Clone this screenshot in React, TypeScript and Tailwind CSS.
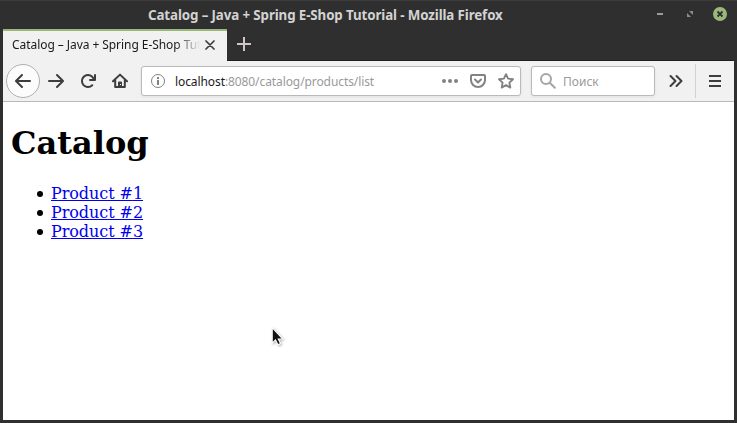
import type { ReactNode } from 'react';

function Icon({ children, className = '' }: { children: ReactNode; className?: string }) {
  return (
    <svg viewBox="0 0 16 16" className={`h-4 w-4 shrink-0 ${className}`} fill="currentColor">
      {children}
    </svg>
  );
}

const ARROW =
  'M15 7H3.414l4.293-4.293a1 1 0 0 0-1.414-1.414l-6 6a1 1 0 0 0 0 1.414l6 6a1 1 0 0 0 1.414-1.414L3.414 9H15a1 1 0 0 0 0-2z';

function TitleBar() {
  return (
    <header className="flex h-[29px] items-center border-t border-[#3c3c3c] pl-[148px] text-[#d3d3d3]">
      <h1 className="w-[360px] whitespace-nowrap text-[13.33px] leading-5 font-bold tracking-[-0.108px]">
        Catalog – Java + Spring E-Shop Tutorial - Mozilla Firefox
      </h1>
      <div className="mb-0.5 ml-auto flex items-center pr-2.5">
        <span className="mr-6 h-0.5 w-1.5 bg-[#9b9b9b]" />
        <svg viewBox="0 0 6 6" className="mr-5 h-1.5 w-1.5" fill="#8c8c8c">
          <path d="M2 0h4v4zM0 2v4h4z" />
        </svg>
        <svg viewBox="0 0 14 14" className="h-3.5 w-3.5">
          <circle cx="7" cy="7" r="7" fill="#9ab87c" />
          <path d="m4.5 4.5 5 5m0-5-5 5" stroke="#2f2f2f" strokeWidth="1.8" />
        </svg>
      </div>
    </header>
  );
}

function TabStrip() {
  return (
    <div className="flex h-8 border-b border-[#1e1e1e] text-[12px]">
      <div className="-mb-px flex w-[224px] items-center border-t-2 border-[#9ab87c] bg-[#f1f1f1] pl-[9px] text-[#18191a]">
        <span className="mb-0.5 w-[188px] overflow-hidden whitespace-nowrap tracking-[-0.06px] [mask-image:linear-gradient(to_right,black_calc(100%-24px),transparent)]">
          Catalog – Java + Spring E-Shop Tutorial
        </span>
        <svg viewBox="0 0 10 10" className="mb-0.5 ml-[5px] h-2.5 w-2.5" stroke="#3d3d3d" strokeWidth="1.7" strokeLinecap="round">
          <path d="m1 1 8 8m0-8-8 8" />
        </svg>
      </div>
      <svg viewBox="0 0 14 14" className="mt-2 ml-2.5 h-3.5 w-3.5" fill="#cfc6c8">
        <path d="M6 0h2v6h6v2H8v6H6V8H0V6h6z" />
      </svg>
    </div>
  );
}

function Toolbar() {
  return (
    <nav className="flex h-[41px] items-center border-b border-[#b9b9b9] bg-[#f1f1f1] text-[12px] text-[#3c3d3d]">
      <button className="ml-[3px] flex h-[34px] w-[34px] shrink-0 items-center justify-center rounded-full border border-[#b0b0b0] bg-[#fcfcfc]">
        <Icon><path d={ARROW} /></Icon>
      </button>
      <Icon className="ml-2 rotate-180"><path d={ARROW} /></Icon>
      <Icon className="ml-4">
        <path d="M15 1a1 1 0 0 0-1 1v2.418A6.995 6.995 0 1 0 8 15a6.954 6.954 0 0 0 4.95-2.05 1 1 0 0 0-1.414-1.414A5.019 5.019 0 1 1 12.549 6H10a1 1 0 0 0 0 2h5a1 1 0 0 0 1-1V2a1 1 0 0 0-1-1z" />
      </Icon>
      <Icon className="ml-4">
        <path d="M1 8.3 8 1.6l7 6.7M3.2 7.5V14h9.6V7.5" fill="none" stroke="currentColor" strokeWidth="2" strokeLinecap="round" strokeLinejoin="round" />
        <path fillRule="evenodd" d="M6 15V9.5a1 1 0 0 1 1-1h2a1 1 0 0 1 1 1V15zm2-4v1h1v-1z" />
      </Icon>
      <div className="ml-[13px] flex h-[30px] w-[380px] shrink-0 items-center rounded-[3px] border border-[#b9b9b9] bg-white shadow-[0_1px_3px_rgba(0,0,0,0.07)]">
        <Icon className="ml-2 text-[#808080]">
          <circle cx="8" cy="8" r="6.5" fill="none" stroke="currentColor" />
          <path d="M7 4h2v2H7zM7 7h2v5H7z" />
        </Icon>
        <span className="mt-0.5 ml-[9px] tracking-[-0.09px] text-[#9a9a9a]">
          <span className="text-[#18191a]">localhost</span>:8080/catalog/products/list
        </span>
        <Icon className="ml-auto text-[#828282]">
          <circle cx="2" cy="8" r="2" /><circle cx="8" cy="8" r="2" /><circle cx="14" cy="8" r="2" />
        </Icon>
        <Icon className="ml-3 text-[#828282]">
          <path d="M8 15a8 8 0 0 1-8-8V3a2 2 0 0 1 2-2h12a2 2 0 0 1 2 2v4a8 8 0 0 1-8 8zm6-12H2v4a6 6 0 0 0 12 0zM8 10.5a1 1 0 0 1-.707-.293l-3-3a1 1 0 0 1 1.414-1.414L8 8.086l2.293-2.293a1 1 0 0 1 1.414 1.414l-3 3A1 1 0 0 1 8 10.5z" />
        </Icon>
        <Icon className="mr-1.5 ml-3 text-[#828282]">
          <path d="m8 1.2 2.1 4.4 4.9.6-3.6 3.4.9 5L8 12.2l-4.3 2.4.9-5L1 6.2l4.9-.6z" fill="none" stroke="currentColor" strokeWidth="1.9" strokeLinejoin="round" />
        </Icon>
      </div>
      <div className="ml-2.5 flex h-[30px] w-[124px] shrink-0 items-center rounded-[3px] border border-[#b9b9b9] bg-white shadow-[0_1px_3px_rgba(0,0,0,0.07)]">
        <Icon className="ml-2 text-[#a5a5a5]">
          <circle cx="6" cy="6" r="5" fill="none" stroke="currentColor" strokeWidth="2" />
          <path d="m9.8 9.8 5 5" stroke="currentColor" strokeWidth="2" strokeLinecap="round" />
        </Icon>
        <span className="mt-0.5 ml-[7px] text-[#9a9a9a]">Поиск</span>
      </div>
      <Icon className="ml-[13px]">
        <path d="m2.5 3 5 5-5 5m6-10 5 5-5 5" fill="none" stroke="currentColor" strokeWidth="2" strokeLinecap="round" strokeLinejoin="round" />
      </Icon>
      <div className="ml-[11px] h-[34px] w-px bg-[#d2d2d2]" />
      <Icon className="ml-[11px]">
        <path d="M2 2h12v2H2zM2 7h12v2H2zM2 12h12v2H2z" />
      </Icon>
    </nav>
  );
}

export default function App() {
  return (
    <div className="flex h-[423px] w-[737px] flex-col overflow-hidden bg-[#2f2f2f] font-['Noto_Sans',sans-serif]">
      <TitleBar />
      <div className="mx-[3px] mb-[3px] flex grow flex-col">
        <TabStrip />
        <Toolbar />
        <main className="relative grow bg-white px-2 pt-[22px] font-['DejaVu_Serif',serif] text-[16px] leading-[19px] text-black">
          <h1 className="text-[32px] leading-[38px] font-bold">Catalog</h1>
          <ul className="mt-[22px] pl-[26px]">
            {[1, 2, 3].map((n) => (
              <li key={n} className="flex items-center">
                <span className="mr-2 h-1.5 w-1.5 rounded-full bg-black" />
                <a href="#" className="tracking-[-0.06px] text-[#0000ee] underline">Product #{n}</a>
              </li>
            ))}
          </ul>
          <svg viewBox="0 0 14 20" className="absolute top-[224px] left-[267px] h-[22px] w-[15.4px] drop-shadow-[1px_1px_1px_rgba(0,0,0,0.3)]">
            <path d="M2 1.5v14l3-2.8 2.2 4.4 2.4-1.1-2.1-4.2h4z" fill="#111" stroke="#fff" strokeWidth="1" />
          </svg>
        </main>
      </div>
    </div>
  );
}
